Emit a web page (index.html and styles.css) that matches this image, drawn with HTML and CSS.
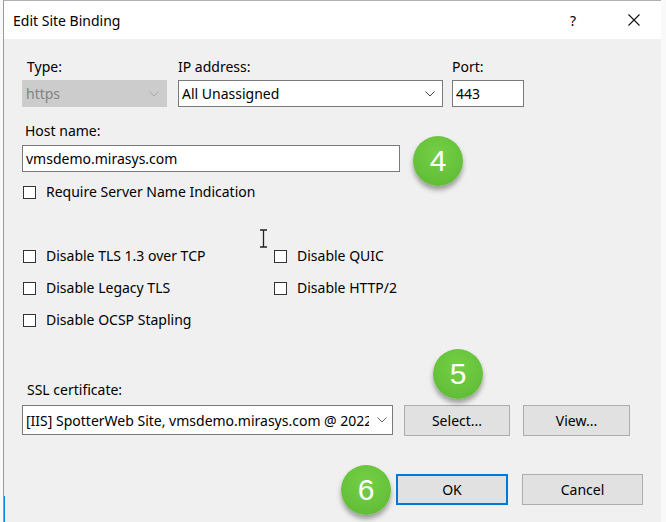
FILE: index.html
```html
<!DOCTYPE html>
<html>
<head>
<meta charset="utf-8">
<link rel="stylesheet" href="styles.css">
</head>
<body>
<div class="window">
  <div class="titlebar">
    <span class="title">Edit Site Binding</span>
    <span class="help">?</span>
    <span class="close"><svg width="12" height="12" viewBox="0 0 12 12"><path d="M0.5 0.5 L11.5 11.5 M11.5 0.5 L0.5 11.5" stroke="#111" stroke-width="1.1" fill="none"/></svg></span>
  </div>
  <div class="content">
    <div class="row-top">
      <div class="field f-type">
        <div class="lbl indent">Type:</div>
        <div class="select disabled"><span>https</span><svg class="chev" width="10" height="6" viewBox="0 0 10 6"><path d="M0.5 0.5 L5 5 L9.5 0.5" stroke="#a8a8a8" fill="none"/></svg></div>
      </div>
      <div class="field f-ip">
        <div class="lbl">IP address:</div>
        <div class="select"><span>All Unassigned</span><svg class="chev" width="10" height="6" viewBox="0 0 10 6"><path d="M0.5 0.5 L5 5 L9.5 0.5" stroke="#444" fill="none"/></svg></div>
      </div>
      <div class="field f-port">
        <div class="lbl">Port:</div>
        <div class="input">443</div>
      </div>
    </div>
    <div class="host">
      <div class="lbl indent2">Host name:</div>
      <div class="input host-input">vmsdemo.mirasys.com</div>
    </div>
    <div class="check sni"><span class="box"></span>Require Server Name Indication</div>
    <div class="checks">
      <div class="check"><span class="box"></span>Disable TLS 1.3 over TCP</div>
      <div class="check"><span class="box"></span>Disable QUIC</div>
      <div class="check"><span class="box"></span>Disable Legacy TLS</div>
      <div class="check"><span class="box"></span>Disable HTTP/2</div>
      <div class="check"><span class="box"></span>Disable OCSP Stapling</div>
    </div>
    <div class="ssl">
      <div class="lbl indent">SSL certificate:</div>
      <div class="ssl-row">
        <div class="select cert"><span>[IIS] SpotterWeb Site, vmsdemo.mirasys.com @ 2022</span><svg class="chev" width="10" height="6" viewBox="0 0 10 6"><path d="M0.5 0.5 L5 5 L9.5 0.5" stroke="#666" fill="none"/></svg></div>
        <div class="btn btn-select">Select...</div>
        <div class="btn btn-view">View...</div>
      </div>
    </div>
    <div class="actions">
      <div class="btn btn-ok">OK</div>
      <div class="btn btn-cancel">Cancel</div>
    </div>
  </div>
  <div class="badge b4">4</div>
  <div class="badge b5">5</div>
  <div class="badge b6">6</div>
  <svg class="ibeam" width="9" height="19" viewBox="0 0 9 19"><path d="M1 1 H8 M4.5 1 V18 M1 18 H8" stroke="#222" stroke-width="1.3" fill="none"/></svg>
  <div class="edge-blue"></div>
</div>
</body>
</html>
```
FILE: styles.css
```css
html, body {
  margin: 0;
  padding: 0;
  background: #f9f9f9;
}
body {
  font-family: "Noto Sans", "Open Sans", sans-serif;
  font-size: 14px;
  color: #000;
}
.window {
  position: relative;
  margin-left: 3px;
  width: 658px;
  height: 522px;
  box-sizing: border-box;
  border-left: 1px solid #9a9a9a;
  border-top: 1px solid #b0b0b0;
  background: #f0f0f0;
  overflow: hidden;
}
.titlebar {
  height: 38px;
  background: #fff;
  display: flex;
  align-items: center;
  padding-left: 9px;
}
.title {
  flex: 1;
  font-size: 14px;
}
.help {
  width: 14px;
  margin-right: 44px;
  font-size: 14px;
}
.close {
  width: 12px;
  height: 12px;
  margin-right: 21px;
  display: flex;
}
.content {
  padding-left: 18px;
}
.lbl {
  height: 18px;
  line-height: 18px;
  white-space: nowrap;
}
.indent { padding-left: 5px; }
.indent2 { padding-left: 3px; }
.row-top {
  display: flex;
  margin-top: 19px;
}
.row-top .lbl { margin-bottom: 4px; }
.f-type { width: 145px; }
.f-ip { width: 265px; margin-left: 11px; }
.f-port { width: 72px; margin-left: 9px; }
.select, .input {
  box-sizing: border-box;
  height: 27px;
  border: 1px solid #7a7a7a;
  background: #fff;
  display: flex;
  align-items: center;
  padding-left: 3px;
  white-space: nowrap;
  overflow: hidden;
}
.select span {
  flex: 1;
  overflow: hidden;
}
.select .chev {
  flex: none;
  margin: 0 7px 0 4px;
}
.select.disabled {
  background: #cccccc;
  border-color: #cccccc;
  color: #838383;
}
.host { margin-top: 15px; }
.host .lbl { margin-bottom: 5px; }
.host-input { width: 378px; }
.check {
  display: flex;
  align-items: center;
  height: 18px;
  line-height: 18px;
  white-space: nowrap;
  padding-left: 1px;
}
.box {
  width: 13px;
  height: 13px;
  box-sizing: border-box;
  border: 1px solid #333;
  background: #fff;
  margin-right: 10px;
  flex: none;
}
.sni { margin-top: 11px; }
.checks {
  display: grid;
  grid-template-columns: 251px auto;
  row-gap: 14px;
  margin-top: 46px;
}
.ssl { margin-top: 52px; }
.ssl .lbl { margin-bottom: 6px; }
.ssl-row {
  display: flex;
  align-items: flex-start;
}
.select.cert {
  width: 371px;
  height: 30px;
  border-color: #7a7a7a;
}
.select.cert span {
  flex: none;
  width: 343px;
}
.select.cert .chev { margin: 0 4px 0 8px; }
.btn {
  box-sizing: border-box;
  height: 31px;
  background: #e1e1e1;
  border: 1px solid #adadad;
  display: flex;
  align-items: center;
  justify-content: center;
}
.btn-select { width: 106px; margin-left: 11px; }
.btn-view { width: 107px; margin-left: 13px; }
.actions {
  display: flex;
  justify-content: flex-end;
  margin-top: 38px;
  padding-right: 18px;
}
.btn-ok {
  width: 112px;
  border: 2px solid #0078d7;
}
.btn-cancel {
  width: 121px;
  margin-left: 14px;
}
.badge {
  position: absolute;
  width: 50px;
  height: 50px;
  border-radius: 50%;
  background: radial-gradient(circle at 50% 35%, #74cf46 0%, #66c23a 60%, #5cb532 100%);
  box-shadow: 0 4px 5px rgba(0, 0, 0, 0.35);
  color: #fff;
  font-family: "Liberation Sans", Arial, sans-serif;
  font-size: 30px;
  line-height: 50px;
  text-align: center;
}
.b4 { left: 409px; top: 135px; }
.b5 { left: 429px; top: 348px; }
.b6 { left: 337px; top: 464px; }
.ibeam {
  position: absolute;
  left: 255px;
  top: 228px;
}
.edge-blue {
  position: absolute;
  left: -2px;
  top: 495px;
  width: 3px;
  height: 27px;
  background: #0a8ad8;
}
```
